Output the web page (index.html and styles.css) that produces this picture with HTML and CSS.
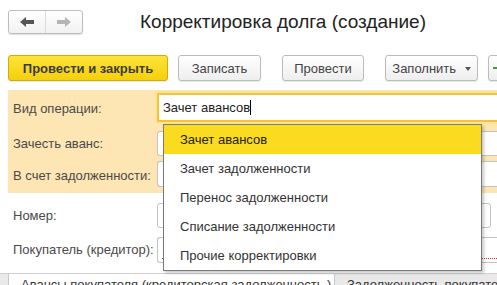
FILE: index.html
```html
<!DOCTYPE html>
<html lang="ru">
<head>
  <meta charset="UTF-8" />
  <title>Корректировка долга (создание)</title>
  <link rel="stylesheet" href="styles.css">
</head>
<body>
  <div class="topbar">
    <div class="nav">
      <button class="nav-btn back">
        <svg width="14" height="10" viewBox="0 0 14 10"><path d="M0 5 L6 0 L6 3 L14 3 L14 7 L6 7 L6 10 Z" fill="#555"/></svg>
      </button>
      <button class="nav-btn fwd">
        <svg width="14" height="10" viewBox="0 0 14 10"><path d="M14 5 L8 0 L8 3 L0 3 L0 7 L8 7 L8 10 Z" fill="#b5b5b5"/></svg>
      </button>
    </div>
    <h1>Корректировка долга (создание)</h1>
  </div>

  <div class="toolbar">
    <button class="btn primary">Провести и закрыть</button>
    <button class="btn w-save">Записать</button>
    <button class="btn w-post group">Провести</button>
    <button class="btn w-fill group">Заполнить <span class="caret"></span></button>
    <button class="btn w-more">
      <svg width="10" height="10" viewBox="0 0 10 10"><path d="M4 0h2v4h4v2H6v4H4V6H0V4h4z" fill="#3aa335"/></svg>
    </button>
  </div>

  <div class="form">
    <div class="panel">
      <div class="row first">
        <label>Вид операции:</label>
        <div class="input focus">Зачет авансов<span class="cursor"></span></div>
      </div>
      <div class="row second">
        <label>Зачесть аванс:</label>
        <div class="input"></div>
      </div>
      <div class="row third">
        <label>В счет задолженности:</label>
        <div class="input"></div>
      </div>
    </div>
    <div class="row plain num">
      <label>Номер:</label>
      <div class="input short"></div>
    </div>
    <div class="row plain buyer">
      <label>Покупатель (кредитор):</label>
      <div class="input required"></div>
    </div>

    <div class="tabs">
      <div class="tab active">Авансы покупателя (кредиторская задолженность )</div>
      <div class="tab">Задолженность покупателя (дебиторская задолженность)</div>
    </div>

    <ul class="dropdown">
      <li class="selected">Зачет авансов</li>
      <li>Зачет задолженности</li>
      <li>Перенос задолженности</li>
      <li>Списание задолженности</li>
      <li>Прочие корректировки</li>
    </ul>
  </div>
</body>
</html>
```

FILE: styles.css
```css
html, body {
  margin: 0;
  padding: 0;
  width: 497px;
  height: 285px;
  overflow: hidden;
  background: #fff;
  font-family: "Liberation Sans", Arial, sans-serif;
  font-size: 13px;
  color: #4a4a4a;
}
button {
  font-family: inherit;
  font-size: 13px;
}
.topbar {
  display: flex;
  align-items: center;
  padding: 10px 0 0 8px;
  height: 23px;
}
.nav {
  display: flex;
  width: 73px;
  height: 22px;
  border: 1px solid #bdbdbd;
  border-radius: 3px;
  background: linear-gradient(#fff, #f1f1f1);
  box-shadow: 0 1px 1px rgba(0,0,0,0.12);
}
.nav-btn {
  flex: 1;
  border: none;
  background: none;
  padding: 0;
  display: flex;
  align-items: center;
  justify-content: center;
}
.nav-btn.back {
  border-right: 1px solid #dadada;
}
h1 {
  margin: 0 0 0 57px;
  font-size: 19px;
  font-weight: normal;
  color: #222;
  white-space: nowrap;
}
.toolbar {
  display: flex;
  align-items: center;
  padding: 22px 0 0 8px;
  height: 26px;
  white-space: nowrap;
}
.btn {
  height: 26px;
  border: 1px solid #bcbcbc;
  border-radius: 3px;
  background: linear-gradient(#fff, #eeeeee);
  box-shadow: 0 1px 1px rgba(0,0,0,0.1);
  color: #444;
  padding: 0;
  margin-right: 10px;
  flex-shrink: 0;
}
.btn.primary {
  width: 160px;
  background: linear-gradient(#fde43c, #f5cf0a);
  border-color: #d1ad00;
  color: #3c3c3c;
  font-weight: bold;
}
.btn.w-save { width: 83px; }
.btn.w-post { width: 82px; }
.btn.w-fill { width: 93px; }
.btn.w-more { width: 30px; text-align: left; padding-left: 4px; }
.btn.group { margin-left: 11px; }
.caret {
  display: inline-block;
  width: 0;
  height: 0;
  border-left: 3px solid transparent;
  border-right: 3px solid transparent;
  border-top: 4px solid #555;
  margin-left: 5px;
  vertical-align: middle;
}
.form {
  position: relative;
  padding-top: 9px;
}
.panel {
  margin-left: 8px;
  background: #fde6b3;
  padding-bottom: 4px;
}
.row {
  display: flex;
  align-items: flex-start;
}
.row label {
  width: 144px;
  flex-shrink: 0;
  padding-left: 5px;
  white-space: nowrap;
}
.input {
  flex: 1;
  height: 24px;
  border: 1px solid #c3c3c3;
  border-right: none;
  border-radius: 3px 0 0 3px;
  background: #fff;
  box-sizing: border-box;
  position: relative;
}
.row.first { height: 34px; }
.row.first label { padding-top: 11px; }
.input.focus {
  margin-top: 3px;
  height: 29px;
  border: 2px solid #f5c436;
  border-right: none;
  border-radius: 0;
  box-shadow: 0 0 0 2px #fde49c;
  padding: 5px 0 0 4px;
  color: #222;
}
.cursor {
  display: inline-block;
  width: 1px;
  height: 15px;
  background: #000;
  vertical-align: -3px;
}
.row.second { height: 33px; }
.row.second .input { margin-top: 7px; height: 25px; }
.row.second label { padding-top: 12px; }
.row.third { height: 32px; }
.row.third .input { margin-top: 4px; height: 26px; }
.row.third label { padding-top: 11px; }
.row.plain { margin-left: 8px; }
.row.num { height: 34px; padding-top: 10px; }
.row.num label { padding-top: 5px; }
.input.short {
  flex: none;
  width: 334px;
  height: 25px;
  border-right: 1px solid #c3c3c3;
  border-radius: 3px;
}
.row.buyer { height: 36px; }
.row.buyer label { padding-top: 5px; }
.input.required {
  height: 26px;
}
.input.required::after {
  content: "";
  position: absolute;
  left: 4px;
  right: 0;
  bottom: 3px;
  border-bottom: 1px dotted #e03030;
}
.tabs {
  display: flex;
  background: #e9e9e9;
  border-top: 1px solid #d0d0d0;
  height: 20px;
  white-space: nowrap;
  overflow: hidden;
}
.tab {
  padding: 3px 12px 0 12px;
  color: #333;
}
.tab.active {
  margin-left: 8px;
  width: 301px;
  background: #fff;
  border-left: 1px solid #c8c8c8;
  border-right: 1px solid #c8c8c8;
  margin-top: -1px;
  border-top: 1px solid #c8c8c8;
}
.dropdown {
  position: absolute;
  left: 163px;
  top: 43px;
  width: 317px;
  margin: 0;
  padding: 0;
  list-style: none;
  background: #fff;
  border: 1px solid #7a7a7a;
  box-shadow: 2px 2px 3px rgba(0,0,0,0.22);
}
.dropdown li {
  height: 29px;
  line-height: 29px;
  padding-left: 16px;
  color: #333;
}
.dropdown li.selected {
  background: #fbdb20;
  color: #222;
}
```
